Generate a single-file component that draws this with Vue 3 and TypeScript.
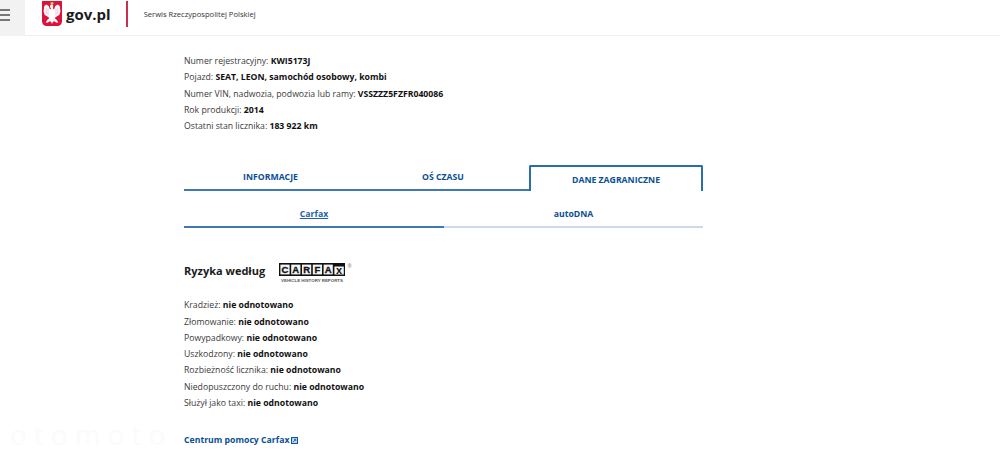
<template>
  <div class="page">
    <header class="topbar">
      <div class="menu-btn">
        <span></span>
        <span></span>
        <span></span>
      </div>
      <div class="brand">
        <svg class="eagle" width="20" height="25" viewBox="0 0 20 25">
          <path d="M0 0H20V20C20 23 18 25 15 25H5C2 25 0 23 0 20Z" fill="#dc143c" />
          <path d="M10 3 11.2 4.6 11 7.5 12 8.5 13.3 5 15.8 3.6 17.8 5.2 18.4 10.5 17.2 14 14.6 15.6 12.6 17 14.8 19 16.4 21.8 14.2 21.4 12.2 20.2 10.8 21 10 23 9.2 21 7.8 20.2 5.8 21.4 3.6 21.8 5.2 19 7.4 17 5.4 15.6 2.8 14 1.6 10.5 2.2 5.2 4.2 3.6 6.7 5 8 8.5 9 7.5 8 6 8.4 4Z" fill="#fff" />
          <path d="M4.2 6.5V13M6 7.5V14.5M14 7.5V14.5M15.8 6.5V13M8.6 18.5 7.5 20M11.4 18.5 12.5 20" stroke="#eeb0bf" stroke-width=".7" fill="none" />
          <path d="M8.3 1.8 10 1 11.7 1.8 11.4 3.2H8.6Z" fill="#f2c14e" />
        </svg>
        <span class="brand-name">gov.pl</span>
      </div>
      <div class="divider"></div>
      <div class="service-name">Serwis Rzeczypospolitej Polskiej</div>
    </header>

    <main class="content">
      <section class="vehicle">
        <p v-for="row in vehicleRows" :key="row.label">
          {{ row.label }}: <b>{{ row.value }}</b>
        </p>
      </section>

      <nav class="tabs">
        <a v-for="tab in tabs" :key="tab" class="tab" :class="{ active: tab === activeTab }">{{ tab }}</a>
      </nav>

      <nav class="subtabs">
        <a class="subtab active">Carfax</a>
        <a class="subtab">autoDNA</a>
      </nav>

      <div class="risk-title">
        <h2>Ryzyka według</h2>
        <svg class="carfax" width="74" height="21" viewBox="0 0 74 21">
          <rect x="0" y="0" width="66" height="13" fill="#111" />
          <g v-for="(letter, i) in carfaxLetters" :key="i">
            <rect :x="1.4 + i * 10.8" y="1.6" width="9.2" height="9.8" fill="#f4f4f4" />
            <text :x="6 + i * 10.8" y="10" class="carfax-letter" text-anchor="middle">{{ letter }}</text>
          </g>
          <rect x="55.4" y="3.5" width="9.4" height="8" fill="#f4f4f4" />
          <text x="60" y="11.2" class="carfax-x" text-anchor="middle">x</text>
          <text x="68.5" y="4.5" class="carfax-reg">®</text>
          <text x="33" y="18.8" class="carfax-sub" text-anchor="middle">VEHICLE HISTORY REPORTS</text>
        </svg>
      </div>

      <section class="risks">
        <p v-for="risk in risks" :key="risk">{{ risk }}: <b>nie odnotowano</b></p>
      </section>

      <a class="help-link">
        Centrum pomocy Carfax
        <svg width="7" height="7" viewBox="0 0 7 7">
          <rect x=".5" y=".5" width="6" height="6" fill="#bcd3ea" stroke="#0b54a0" />
          <path d="M2.2 4.8 4.6 2.4M3 2.3H4.7V4" fill="none" stroke="#0b54a0" stroke-width=".8" />
        </svg>
      </a>
    </main>

    <div class="watermark">otomoto</div>
  </div>
</template>

<script setup lang="ts">
const vehicleRows = [
  { label: 'Numer rejestracyjny', value: 'KWI5173J' },
  { label: 'Pojazd', value: 'SEAT, LEON, samochód osobowy, kombi' },
  { label: 'Numer VIN, nadwozia, podwozia lub ramy', value: 'VSSZZZ5FZFR040086' },
  { label: 'Rok produkcji', value: '2014' },
  { label: 'Ostatni stan licznika', value: '183 922 km' }
]

const tabs = ['INFORMACJE', 'OŚ CZASU', 'DANE ZAGRANICZNE']
const activeTab = 'DANE ZAGRANICZNE'

const carfaxLetters = ['C', 'A', 'R', 'F', 'A']

const risks = [
  'Kradzież',
  'Złomowanie',
  'Powypadkowy',
  'Uszkodzony',
  'Rozbieżność licznika',
  'Niedopuszczony do ruchu',
  'Służył jako taxi'
]
</script>

<style>
html,
body {
  margin: 0;
  background: #fff;
}
</style>

<style scoped>
.page {
  position: relative;
  width: 1000px;
  height: 455px;
  overflow: hidden;
  font-family: 'Open Sans', 'Liberation Sans', sans-serif;
  font-size: 8.7px;
  line-height: 16.25px;
  color: #3a3a3a;
}

.topbar {
  display: flex;
  align-items: center;
  height: 35px;
  border-bottom: 1px solid #f1f1f1;
}

.menu-btn {
  display: flex;
  flex-direction: column;
  gap: 3px;
  box-sizing: border-box;
  width: 25px;
  height: 35px;
  padding-top: 9px;
  background: #f2f2f2;
}

.menu-btn span {
  width: 10px;
  height: 2px;
  background: #777;
}

.brand {
  display: flex;
  align-items: center;
  gap: 4px;
  margin-left: 17px;
  margin-top: -8px;
}

.eagle {
  display: block;
}

.brand-name {
  font-size: 15px;
  font-weight: 700;
  line-height: 20px;
  color: #1b1b1b;
}

.divider {
  width: 2px;
  height: 26px;
  margin-left: 15px;
  margin-top: -7px;
  background: #c8304f;
}

.service-name {
  margin-left: 16px;
  margin-top: -7px;
  font-size: 7.6px;
  color: #333;
}

.content {
  width: 520px;
  margin-left: 184px;
  padding-top: 17px;
}

.vehicle p,
.risks p {
  margin: 0;
}

.vehicle b,
.risks b {
  font-weight: 700;
  color: #111;
}

.tabs {
  display: grid;
  grid-template-columns: 173px 172px 174px;
  height: 26px;
  margin-top: 31px;
}

.tab {
  display: flex;
  align-items: center;
  justify-content: center;
  padding-bottom: 1px;
  border-bottom: 2px solid #3f78b4;
  font-size: 8.7px;
  font-weight: 700;
  color: #0b4f96;
}

.tab.active {
  padding-bottom: 0;
  padding-top: 1px;
  border: 2px solid #2a6cb0;
  border-bottom: none;
  border-radius: 2px 2px 0 0;
}

.subtabs {
  display: grid;
  grid-template-columns: 260px 259px;
  height: 37px;
}

.subtab {
  display: flex;
  align-items: center;
  justify-content: center;
  padding-top: 11px;
  border-bottom: 2px solid #cbd9ea;
  font-size: 8.7px;
  font-weight: 700;
  color: #0b4f96;
}

.subtab.active {
  border-bottom-color: #3f78b4;
  color: #1e63ad;
  text-decoration: underline;
}

.risk-title {
  display: flex;
  align-items: flex-start;
  gap: 14px;
  height: 21px;
  margin-top: 35px;
}

.risk-title h2 {
  margin: 0;
  font-size: 11px;
  font-weight: 700;
  line-height: 16px;
  color: #1b1b1b;
}

.carfax {
  display: block;
  flex: none;
}

.carfax-letter {
  font-family: 'Liberation Sans', sans-serif;
  font-size: 9.5px;
  font-weight: 700;
  fill: #111;
  stroke: #111;
  stroke-width: 0.3;
}

.carfax-x {
  font-family: 'Liberation Sans', sans-serif;
  font-size: 11px;
  font-weight: 700;
  fill: #111;
}

.carfax-reg {
  font-size: 5px;
  fill: #777;
}

.carfax-sub {
  font-family: 'Liberation Sans', sans-serif;
  font-size: 4.4px;
  font-weight: 700;
  fill: #555;
}

.risks {
  margin-top: 13px;
}

.help-link {
  display: flex;
  align-items: center;
  gap: 2px;
  margin-top: 21px;
  font-size: 8.7px;
  font-weight: 700;
  color: #0b4f96;
}

.watermark {
  position: absolute;
  left: 10px;
  top: 419px;
  font-size: 28px;
  line-height: 30px;
  letter-spacing: 7px;
  color: #fbfbfb;
}
</style>
